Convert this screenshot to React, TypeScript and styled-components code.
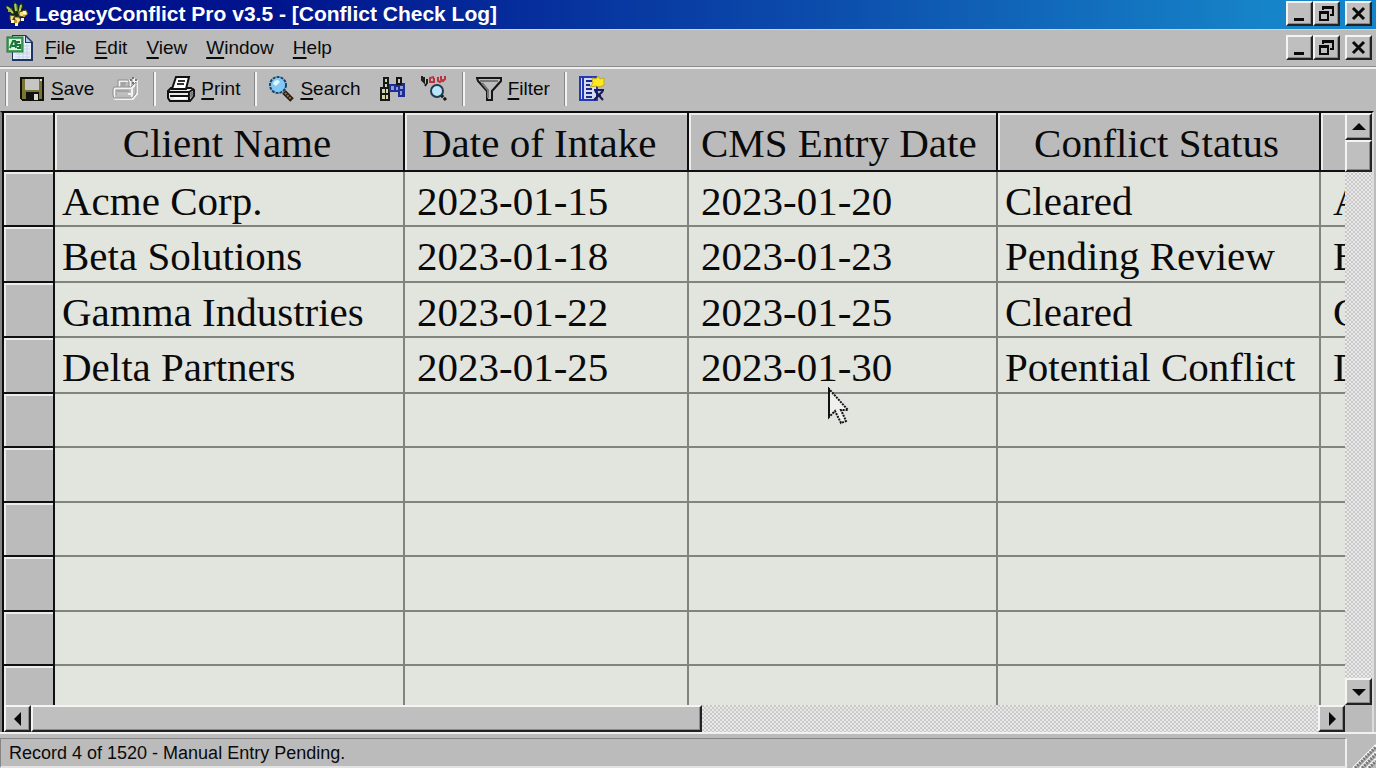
import React from 'react';
import styled, { createGlobalStyle, css } from 'styled-components';

const GlobalStyle = createGlobalStyle`
  *, *::before, *::after { box-sizing: border-box; }
  body {
    margin: 0;
    background: #bbbbbb;
    color: #0a0a0a;
    font-family: 'Liberation Sans', sans-serif;
    overflow: hidden;
  }
  button { font: inherit; color: inherit; padding: 0; margin: 0; }
`;

const raised = css`
  border: 2px solid;
  border-color: #f4f4f4 #222 #222 #f4f4f4;
  box-shadow: inset -1px -1px 0 #8a8a8a;
  background: #bfbfbf;
`;

const Window = styled.div`
  height: 100vh;
  display: flex;
  flex-direction: column;
  background: #bbbbbb;
`;

const TitleBar = styled.header`
  height: 29px;
  flex: none;
  display: flex;
  align-items: center;
  gap: 6px;
  padding: 0 4px 2px;
  background: linear-gradient(90deg, #00118a 0%, #00148e 20%, #0c4dac 60%, #1684c8 92%, #1684c8 100%);
`;

const Title = styled.h1`
  margin: 0;
  flex: 1;
  color: #fff;
  font: bold 21px/26px 'Liberation Sans', sans-serif;
`;

const WindowButtons = styled.div`
  display: flex;
  align-items: center;
`;

const WindowButton = styled.button<{ $spaced?: boolean }>`
  ${raised}
  width: 27px;
  height: 25px;
  display: grid;
  place-items: center;
  margin-left: ${(p) => (p.$spaced ? 5 : 0)}px;
`;

const MenuBar = styled.nav`
  height: 38px;
  flex: none;
  display: flex;
  align-items: center;
  padding: 0 4px 1px 6px;
  border-top: 1px solid #d4d4d4;
  border-bottom: 1px solid #8c8c8c;
`;

const MenuList = styled.div`
  flex: 1;
  display: flex;
  gap: 19px;
  padding-left: 11px;
`;

const MenuItem = styled.button`
  border: 0;
  background: none;
  font-size: 19px;
  line-height: 26px;
`;

const Mnemonic = styled.span`
  text-decoration: underline;
  text-decoration-thickness: 2px;
  text-underline-offset: 3px;
`;

const ToolBar = styled.div`
  height: 44px;
  flex: none;
  display: flex;
  align-items: center;
  padding: 0 5px 3px;
  border-top: 2px solid #efefef;
`;

const Separator = styled.span`
  width: 3px;
  height: 34px;
  border-left: 1px solid #888;
  border-right: 2px solid #f2f2f2;
  margin-right: 11px;
`;

const Tool = styled.button<{ $gap?: number }>`
  border: 0;
  background: none;
  display: flex;
  align-items: center;
  gap: 6px;
  font-size: 19px;
  line-height: 26px;
  margin-right: ${(p) => p.$gap ?? 0}px;
`;

const Workspace = styled.main`
  flex: 1;
  min-height: 0;
  display: grid;
  grid-template-columns: minmax(0, 1fr) 27px;
  grid-template-rows: minmax(0, 1fr) 27px;
  margin-right: 2px;
  padding-left: 2px;
  border-top: 2px solid #0c0c0c;
  border-left: 2px solid #858585;
  border-right: 2px solid #dcdcdc;
  box-shadow: inset 2px 0 0 #0c0c0c;
`;

const SheetView = styled.div`
  overflow: hidden;
  background: #e2e4de;
`;

const Sheet = styled.table`
  table-layout: fixed;
  border-collapse: separate;
  border-spacing: 0;
  width: 1800px;
  font: 41px/46px 'Liberation Serif', serif;
`;

const Column = styled.col<{ $width?: number }>`
  ${(p) => p.$width && `width: ${p.$width}px;`}
`;

const HeadCell = styled.th<{ $inset?: number }>`
  height: 59px;
  padding: 2px 4px 0 ${(p) => p.$inset ?? 0}px;
  font-weight: normal;
  white-space: nowrap;
  text-align: ${(p) => (p.$inset ? 'left' : 'center')};
  background: #bbbbbb;
  border-right: 2px solid #101010;
  border-bottom: 2px solid #101010;
  box-shadow: inset 2px 2px 0 #ececec;
`;

const Row = styled.tr<{ $empty?: boolean }>`
  height: ${(p) => (p.$empty ? 54 : 55)}px;
  &:nth-child(even) { height: ${(p) => (p.$empty ? 55 : 56)}px; }
`;

const RowHead = styled.th`
  padding: 0;
  background: #bbbbbb;
  border-right: 2px solid #101010;
  border-bottom: 2px solid #101010;
  box-shadow: inset 2px 2px 0 #ececec;
`;

const Cell = styled.td<{ $inset?: number }>`
  padding: 4px 0 0 ${(p) => p.$inset ?? 12}px;
  white-space: nowrap;
  border-right: 2px solid #80837e;
  border-bottom: 2px solid #80837e;
`;

const track = css`
  background: repeating-conic-gradient(#c9c9c9 0 25%, #e9e9e9 0 50%) 0 0 / 4px 4px;
`;

const VerticalBar = styled.div`
  ${track}
  display: flex;
  flex-direction: column;
`;

const HorizontalBar = styled.div`
  ${track}
  display: flex;
`;

const ScrollButton = styled.button`
  ${raised}
  width: 27px;
  height: 27px;
  display: grid;
  place-items: center;
`;

const VerticalThumb = styled.div`
  ${raised}
  height: 32px;
`;

const HorizontalThumb = styled.div`
  ${raised}
  width: 50%;
`;

const Spacer = styled.span`
  flex: 1;
`;

const StatusBar = styled.footer`
  height: 36px;
  flex: none;
  display: flex;
  padding-top: 4px;
  border-top: 2px solid #f0f0f0;
`;

const StatusText = styled.div`
  flex: 1;
  padding-left: 8px;
  font-size: 18px;
  line-height: 29px;
  border: 2px solid;
  border-color: #858585 #efefef #e4e4e4 #858585;
  border-top-width: 1px;
  border-left-width: 1px;
`;

const Grip = styled.div`
  width: 29px;
  display: flex;
  align-items: flex-end;
  justify-content: flex-end;
`;

const Pointer = styled.svg`
  position: absolute;
  left: 827px;
  top: 387px;
`;

const Logo = () => (
  <svg width="25" height="27" viewBox="0 0 25 27" aria-hidden="true">
    <path d="M14 20L8 12M13 20L18 10M12 15L11 3" stroke="#182a12" strokeWidth="3" fill="none" />
    <path d="M10 1l4 4 1 9-4-4zM1 5l7 3 3 7-6-3zM17 2l2 4-3 7-3 2z" fill="#397d2d" stroke="#152615" />
    <path d="M11 4l1 7M3 7l6 6M17 5l-2 9" stroke="#b8c95a" strokeWidth="2" />
    <path d="M6 15l5 1-3 5-2-1zM15 12l7-2 2 4-4 3-5-1zM10 17h5l2 3-4 5z" fill="#f2df82" stroke="#4e4922" />
    <path d="M7 20h3v3H7zM17 18h3v3h-3zM11 23h3v3h-3zM19 11h3v3h-3z" fill="#fff8d7" />
    <path d="M10 20h3v3h-3zM19 15h2v2h-2zM4 10h2v2H4z" fill="#c69930" />
  </svg>
);

const SheetIcon = () => (
  <svg width="28" height="28" viewBox="0 0 28 28" aria-hidden="true">
    <path d="M6 1h14l7 7v19H6z" fill="#1d3560" />
    <path d="M7 2h12v7h6v16H7z" fill="#e8f1fb" />
    <path d="M20 3l5 5h-5z" fill="#b7cbe5" />
    <path d="M9 20h15M9 23h15M18 12h6M18 15h6M18 18h6M21 10v15M17 18v7M13 19v6" stroke="#c3d2e6" />
    <rect x="1" y="3" width="16" height="15" fill="#46a75b" stroke="#237139" />
    <rect x="3" y="5" width="12" height="11" fill="#e5f4e4" />
    <path d="M4 14l3-7h2l1 7M6 12h3M14 8h-3l-1 3h4v3h-3" stroke="#18773a" strokeWidth="2" fill="none" />
  </svg>
);

const SaveIcon = () => (
  <svg width="26" height="26" viewBox="0 0 26 26" aria-hidden="true" shapeRendering="crispEdges">
    <path d="M1 1h24v24H3l-2-2z" fill="#101008" />
    <path d="M3 3h3v11h14V3h3v20H3z" fill="#777536" />
    <path d="M6 3h14v11H6z" fill="#c5c5c3" />
    <path d="M7 16h13v8H7z" fill="#10110d" />
    <path d="M15 18h4v6h-4z" fill="#d8d8d5" />
    <path d="M21 3h2v2h-2z" fill="#dfdfd8" />
  </svg>
);

const SendIcon = () => (
  <svg width="27" height="26" viewBox="0 0 27 26" aria-hidden="true" fill="none" strokeLinejoin="round">
    <path d="M3 12h17l5-5v11l-4 5H3l-1-3v-6zM7 12V5h11v7M20 13v9M5 18h14M21 5h5M22 2v7" stroke="#f3f3f3" strokeWidth="2" />
    <path d="M2 11h17l5-5v11l-4 5H2l-1-3v-6zM6 11V4h10l1 2v5M9 7h5M9 9h4M4 15h13M4 18h12" stroke="#8c8c8c" />
    <path d="M18 4h2M21 1v2M23 4h2M21 6v2" stroke="#777" strokeWidth="2" strokeDasharray="2 1" />
  </svg>
);

const PrintIcon = () => (
  <svg width="28" height="26" viewBox="0 0 28 26" aria-hidden="true">
    <path d="M4 12h20l3 2v6l-4 5H3l-2-3v-7z" fill="#e8e8e8" stroke="#111" strokeWidth="2" />
    <path d="M9 1h13l-3 12H5z" fill="#fff" stroke="#111" strokeWidth="2" />
    <path d="M11 5h7M10 8h7" stroke="#333" strokeWidth="2" />
    <path d="M1 16h21v8M22 16l5-3M3 20h18" fill="none" stroke="#111" strokeWidth="2" />
    <path d="M7 22h12" stroke="#fff" strokeWidth="2" />
    <path d="M23 18l3-2M23 21l3-3" stroke="#777" strokeWidth="2" />
  </svg>
);

const SearchIcon = () => (
  <svg width="26" height="27" viewBox="0 0 26 27" aria-hidden="true">
    <path d="M16 17l8 8" stroke="#201c16" strokeWidth="5" />
    <path d="M17 18l6 6" stroke="#aa7631" strokeWidth="2" strokeDasharray="2 1" />
    <circle cx="10" cy="10" r="8" fill="#81c8f6" stroke="#17436a" strokeWidth="2" strokeDasharray="3 1" />
    <path d="M5 9q1-4 5-4l2 2-4 4z" fill="#dff5ff" />
  </svg>
);

const BinocularsIcon = () => (
  <svg width="27" height="26" viewBox="0 0 27 26" aria-hidden="true" shapeRendering="crispEdges">
    <path d="M4 1h6v10h1v14H1V11h3z" fill="#151915" />
    <path d="M6 3h2v3H6zM6 8h2v3H6zM3 13h3v4H3zM7 13h2v4H7zM3 19h3v4H3zM7 19h2v4H7z" fill="#d3d4ad" />
    <path d="M10 8h7V7h9v14h-7v-5h-9z" fill="#1c2d96" />
    <path d="M17 1h6v8h-6z" fill="#141414" />
    <path d="M19 3h2v4h-2z" fill="#c9cbbd" />
    <path d="M12 10h3v4h-3zM17 11h2v3h-2zM21 10h3v3h-3zM21 15h2v4h-2z" fill="#8e9cdf" />
  </svg>
);

const SpellIcon = () => (
  <svg width="28" height="27" viewBox="0 0 28 27" aria-hidden="true" fill="none">
    <path d="M2 1v4l2 2V2M7 4v4l-2 3" stroke="#20201e" strokeWidth="2" />
    <path d="M14 2l-4 1v4h4V3M18 2v4l2 1 2-2M21 1v3l2 2 2-2V1" stroke="#ba3340" strokeWidth="2" />
    <path d="M21 20l5 5" stroke="#151515" strokeWidth="3" strokeDasharray="3 1" />
    <circle cx="17" cy="16" r="6" fill="#b9e4fa" stroke="#203a50" strokeWidth="2" />
  </svg>
);

const FilterIcon = () => (
  <svg width="26" height="26" viewBox="0 0 26 26" aria-hidden="true">
    <path d="M1 2h24v3l-9 10v9h-5v-9L2 5z" fill="#bcbcbc" stroke="#161616" strokeWidth="2" />
    <path d="M4 5h18M6 7l6 7v8" stroke="#777" strokeWidth="2" fill="none" />
  </svg>
);

const ReportIcon = () => (
  <svg width="27" height="27" viewBox="0 0 27 27" aria-hidden="true">
    <path d="M2 2h17v23H2z" fill="#d4daf0" stroke="#2538b6" strokeWidth="2" />
    <path d="M5 3v21" stroke="#2538b6" strokeWidth="2" />
    <path d="M8 6h6M8 10h4M8 14h6M8 18h6M8 22h6" stroke="#1b298a" strokeWidth="2" />
    <path d="M14 3l4 1 2-3 2 3 4-1v7l-4 2-4-1-6 1 3-4z" fill="#ffe81f" stroke="#c4aa18" />
    <path d="M16 15h10M17 16l8 9M25 16l-9 9M18 21h5" stroke="#171a54" strokeWidth="2" fill="none" />
  </svg>
);

const MinimizeGlyph = () => (
  <svg width="16" height="16" aria-hidden="true"><path d="M2 12h10v3H2z" fill="#0a0a0a" /></svg>
);

const RestoreGlyph = () => (
  <svg width="18" height="18" viewBox="0 0 18 18" aria-hidden="true" fill="none" stroke="#0a0a0a" shapeRendering="crispEdges">
    <path d="M5 5V2h10v8h-3M2 8h8v7H2z" strokeWidth="2" />
    <path d="M4 2h12M1 7h10" strokeWidth="3" />
  </svg>
);

const CloseGlyph = () => (
  <svg width="16" height="16" aria-hidden="true"><path d="M2 2l11 11M13 2L2 13" stroke="#0a0a0a" strokeWidth="3" /></svg>
);

const arrows = {
  up: 'M8 4l7 7H1z',
  down: 'M8 12l7-7H1z',
  left: 'M4 8l7-7v14z',
  right: 'M12 8L5 1v14z',
};

const Arrow = ({ to }: { to: keyof typeof arrows }) => (
  <svg width="16" height="16" aria-hidden="true"><path d={arrows[to]} fill="#0a0a0a" /></svg>
);

const Controls = ({ of }: { of: string }) => (
  <WindowButtons>
    <WindowButton aria-label={`Minimize ${of}`}><MinimizeGlyph /></WindowButton>
    <WindowButton aria-label={`Restore ${of}`}><RestoreGlyph /></WindowButton>
    <WindowButton aria-label={`Close ${of}`} $spaced><CloseGlyph /></WindowButton>
  </WindowButtons>
);

const Label = ({ text }: { text: string }) => (
  <span><Mnemonic>{text[0]}</Mnemonic>{text.slice(1)}</span>
);

const records = [
  ['Acme Corp.', '2023-01-15', '2023-01-20', 'Cleared', 'A'],
  ['Beta Solutions', '2023-01-18', '2023-01-23', 'Pending Review', 'B'],
  ['Gamma Industries', '2023-01-22', '2023-01-25', 'Cleared', 'G'],
  ['Delta Partners', '2023-01-25', '2023-01-30', 'Potential Conflict', 'D'],
];

const insets = [7, 12, 12, 7, 12];

export default function App() {
  return (
    <Window>
      <GlobalStyle />
      <TitleBar>
        <Logo />
        <Title>LegacyConflict Pro v3.5 - [Conflict Check Log]</Title>
        <Controls of="application" />
      </TitleBar>
      <MenuBar>
        <SheetIcon />
        <MenuList>
          {['File', 'Edit', 'View', 'Window', 'Help'].map((name) => (
            <MenuItem key={name}><Label text={name} /></MenuItem>
          ))}
        </MenuList>
        <Controls of="document" />
      </MenuBar>
      <ToolBar>
        <Separator />
        <Tool $gap={18}><SaveIcon /><Label text="Save" /></Tool>
        <Tool $gap={14} aria-label="Send" disabled><SendIcon /></Tool>
        <Separator />
        <Tool $gap={14}><PrintIcon /><Label text="Print" /></Tool>
        <Separator />
        <Tool $gap={18}><SearchIcon /><Label text="Search" /></Tool>
        <Tool $gap={14} aria-label="Find"><BinocularsIcon /></Tool>
        <Tool $gap={14} aria-label="Look up"><SpellIcon /></Tool>
        <Separator />
        <Tool $gap={14}><FilterIcon /><Label text="Filter" /></Tool>
        <Separator />
        <Tool aria-label="Report"><ReportIcon /></Tool>
      </ToolBar>
      <Workspace>
        <SheetView>
          <Sheet>
            <colgroup>
              <Column $width={51} />
              <Column $width={350} />
              <Column $width={284} />
              <Column $width={309} />
              <Column $width={323} />
              <Column />
            </colgroup>
            <thead>
              <tr>
                <HeadCell />
                <HeadCell>Client Name</HeadCell>
                <HeadCell $inset={17}>Date of Intake</HeadCell>
                <HeadCell $inset={12}>CMS Entry Date</HeadCell>
                <HeadCell>Conflict Status</HeadCell>
                <HeadCell />
              </tr>
            </thead>
            <tbody>
              {records.map((record) => (
                <Row key={record[0]}>
                  <RowHead />
                  {record.map((value, i) => <Cell key={i} $inset={insets[i]}>{value}</Cell>)}
                </Row>
              ))}
              {Array.from({ length: 6 }, (_, r) => (
                <Row key={r} $empty>
                  <RowHead />
                  {insets.map((_, i) => <Cell key={i} />)}
                </Row>
              ))}
            </tbody>
          </Sheet>
        </SheetView>
        <VerticalBar>
          <ScrollButton aria-label="Scroll up"><Arrow to="up" /></ScrollButton>
          <VerticalThumb />
          <Spacer />
          <ScrollButton aria-label="Scroll down"><Arrow to="down" /></ScrollButton>
        </VerticalBar>
        <HorizontalBar>
          <ScrollButton aria-label="Scroll left"><Arrow to="left" /></ScrollButton>
          <HorizontalThumb />
          <Spacer />
          <ScrollButton aria-label="Scroll right"><Arrow to="right" /></ScrollButton>
        </HorizontalBar>
      </Workspace>
      <StatusBar>
        <StatusText role="status">Record 4 of 1520 - Manual Entry Pending.</StatusText>
        <Grip>
          <svg width="24" height="24" aria-hidden="true">
            <path d="M1 24L24 1M8 24L24 8M15 24l9-9" stroke="#fafafa" strokeWidth="2" />
            <path d="M3 24L24 3M10 24l14-14M17 24l7-7" stroke="#777" strokeWidth="3" strokeDasharray="2 1" />
          </svg>
        </Grip>
      </StatusBar>
      <Pointer width="22" height="40" viewBox="0 0 22 40" aria-hidden="true">
        <path d="M2 2v28l6-6 6 12 5-2-5-11h7z" fill="#f0f0ee" stroke="#111" strokeWidth="2" strokeDasharray="2 1" />
        <path d="M2 1v28" stroke="#111" strokeWidth="2" />
      </Pointer>
    </Window>
  );
}
